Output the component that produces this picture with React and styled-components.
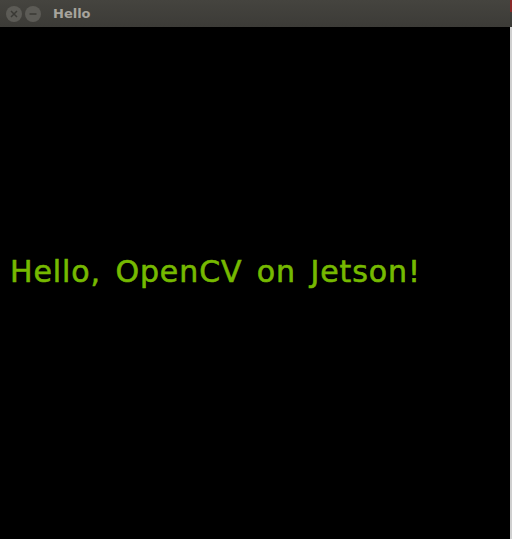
import React from "react";
import styled, { createGlobalStyle } from "styled-components";

const Global = createGlobalStyle`
  html, body { margin: 0; padding: 0; background: #000; }
  body { width: 512px; height: 539px; overflow: hidden; }
`;

const Window = styled.div`
  width: 512px;
  height: 539px;
  display: flex;
  flex-direction: column;
  background: #000;
`;

const TitleBar = styled.div`
  height: 27px;
  flex: none;
  display: flex;
  align-items: center;
  padding-left: 6px;
  gap: 3px;
  background: linear-gradient(#45443f, #3c3b37);
  position: relative;
`;

const Corner = styled.div`
  position: absolute;
  right: 0;
  top: 0;
  width: 2px;
  height: 12px;
  background: #8a2a2a;
`;

const CircleBtn = styled.div`
  width: 16px;
  height: 16px;
  border-radius: 50%;
  background: #5c5b56;
  display: flex;
  align-items: center;
  justify-content: center;
`;

const Title = styled.div`
  margin-left: 9px;
  font-family: "DejaVu Sans", sans-serif;
  font-weight: bold;
  font-size: 13px;
  color: #a7a49d;
`;

const Body = styled.div`
  flex: 1;
  display: flex;
  border-right: 2px solid #cfcfcf;
`;

const Canvas = styled.div`
  flex: 1;
  background: #000;
  padding-top: 227px;
  padding-left: 10px;
`;

const Text = styled.div`
  font-family: "DejaVu Sans", sans-serif;
  font-size: 30px;
  line-height: 36px;
  color: #76b900;
  -webkit-text-stroke: 0.6px #76b900;
  letter-spacing: 0.9px;
  word-spacing: 4px;
  white-space: nowrap;
`;

export default function App() {
  return (
    <Window>
      <Global />
      <TitleBar>
        <Corner />
        <CircleBtn>
          <svg width="8" height="8" viewBox="0 0 8 8">
            <path d="M1 1L7 7M7 1L1 7" stroke="#3a3935" strokeWidth="1.5" />
          </svg>
        </CircleBtn>
        <CircleBtn>
          <svg width="8" height="8" viewBox="0 0 8 8">
            <path d="M0.5 4H7.5" stroke="#3a3935" strokeWidth="1.5" />
          </svg>
        </CircleBtn>
        <Title>Hello</Title>
      </TitleBar>
      <Body>
        <Canvas>
          <Text>Hello, OpenCV on Jetson!</Text>
        </Canvas>
      </Body>
    </Window>
  );
}
